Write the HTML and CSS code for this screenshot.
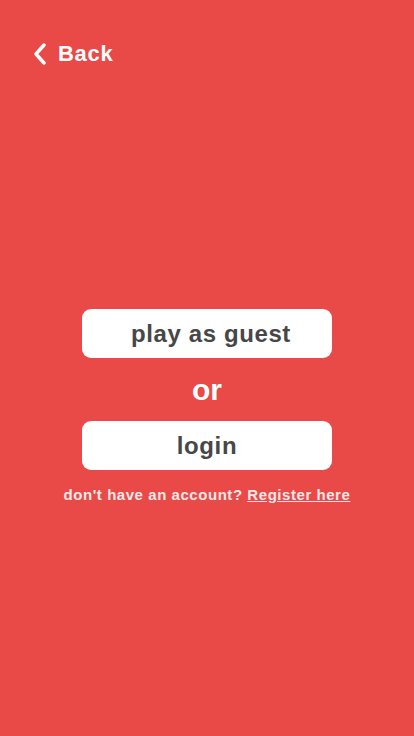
FILE: index.html
```html
<!DOCTYPE html>
<html>
<head>
<meta charset="utf-8">
<link rel="stylesheet" href="styles.css">
</head>
<body>
<div class="screen">
  <header class="top">
    <a class="back" href="#">
      <svg class="chev" width="14" height="22" viewBox="0 0 14 22"><path d="M11 2 L3 11 L11 20" fill="none" stroke="#fff" stroke-width="3.4" stroke-linecap="round" stroke-linejoin="round"/></svg>
      <span>Back</span>
    </a>
  </header>
  <main class="center">
    <button class="btn btn-guest">play as guest</button>
    <div class="or">or</div>
    <button class="btn">login</button>
    <p class="note">don't have an account? <a href="#">Register here</a></p>
  </main>
</div>
</body>
</html>
```
FILE: styles.css
```css
html, body {
  margin: 0;
  padding: 0;
  background: #e94a47;
}
.screen {
  width: 414px;
  height: 736px;
  display: flex;
  flex-direction: column;
  font-family: "Liberation Sans", Arial, sans-serif;
}
.top {
  padding: 41px 0 0 33px;
  height: 40px;
}
.back {
  display: inline-flex;
  align-items: center;
  gap: 11px;
  color: #fff;
  text-decoration: none;
  font-weight: bold;
  font-size: 22px;
  letter-spacing: 0.7px;
}
.center {
  margin-top: 228px;
  display: flex;
  flex-direction: column;
  align-items: center;
}
.btn {
  width: 250px;
  height: 49px;
  border: none;
  border-radius: 9px;
  background: #fff;
  color: #474747;
  font-family: "Liberation Sans", Arial, sans-serif;
  font-weight: bold;
  font-size: 24px;
  letter-spacing: 0.6px;
  padding: 0;
}
.btn-guest {
  padding-left: 8px;
}
.or {
  color: #fff;
  font-weight: bold;
  font-size: 30px;
  height: 63px;
  line-height: 63px;
}
.note {
  margin: 16px 0 0;
  color: #f6e8e8;
  font-weight: bold;
  font-size: 15px;
  letter-spacing: 0.55px;
}
.note a {
  color: #f6e8e8;
  text-decoration: underline;
}
```
